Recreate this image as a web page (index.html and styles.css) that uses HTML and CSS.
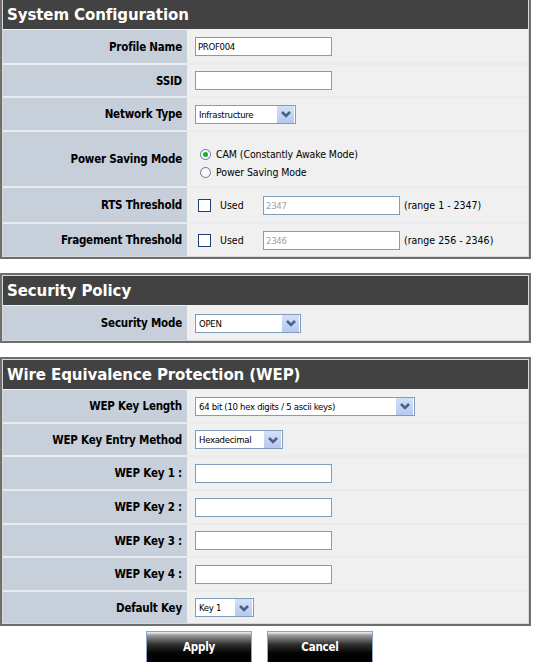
FILE: index.html
```html
<!DOCTYPE html>
<html>
<head>
<meta charset="utf-8">
<link rel="stylesheet" href="styles.css">
</head>
<body>
<div class="page">
  <div class="section s1">
    <div class="head">System Configuration</div>
    <div class="rows">
      <div class="row h33"><div class="lab">Profile Name</div><div class="val"><span class="input w137">PROF004</span></div></div>
      <div class="row h31"><div class="lab">SSID</div><div class="val"><span class="input w137"></span></div></div>
      <div class="row h32"><div class="lab">Network Type</div><div class="val"><span class="select"><span class="stext w77">Infrastructure</span><span class="btn"><svg width="16" height="16" viewBox="0 0 16 16"><path d="M4 6 L8 10 L12 6" fill="none" stroke="#4a5f8a" stroke-width="2.6"/></svg></span></span></div></div>
      <div class="row h54"><div class="lab">Power Saving Mode</div><div class="val col">
        <div class="opt"><span class="radio on"><span class="dot"></span></span>CAM (Constantly Awake Mode)</div>
        <div class="opt"><span class="radio"></span>Power Saving Mode</div>
      </div></div>
      <div class="row h34"><div class="lab">RTS Threshold</div><div class="val"><span class="check"></span><span class="used">Used</span><span class="input w137 dim">2347</span><span class="range">(range 1 - 2347)</span></div></div>
      <div class="row h32"><div class="lab">Fragement Threshold</div><div class="val"><span class="check"></span><span class="used">Used</span><span class="input w137 dim">2346</span><span class="range">(range 256 - 2346)</span></div></div>
    </div>
  </div>

  <div class="section">
    <div class="head">Security Policy</div>
    <div class="rows">
      <div class="row h34"><div class="lab">Security Mode</div><div class="val"><span class="select"><span class="stext w82">OPEN</span><span class="btn"><svg width="16" height="16" viewBox="0 0 16 16"><path d="M4 6 L8 10 L12 6" fill="none" stroke="#4a5f8a" stroke-width="2.6"/></svg></span></span></div></div>
    </div>
  </div>

  <div class="section">
    <div class="head">Wire Equivalence Protection (WEP)</div>
    <div class="rows">
      <div class="row h32"><div class="lab">WEP Key Length</div><div class="val"><span class="select"><span class="stext w192">64 bit (10 hex digits / 5 ascii keys)</span><span class="btn"><svg width="16" height="16" viewBox="0 0 16 16"><path d="M4 6 L8 10 L12 6" fill="none" stroke="#4a5f8a" stroke-width="2.6"/></svg></span></span></div></div>
      <div class="row h31"><div class="lab">WEP Key Entry Method</div><div class="val"><span class="select"><span class="stext w62">Hexadecimal</span><span class="btn"><svg width="16" height="16" viewBox="0 0 16 16"><path d="M4 6 L8 10 L12 6" fill="none" stroke="#4a5f8a" stroke-width="2.6"/></svg></span></span></div></div>
      <div class="row h32"><div class="lab">WEP Key 1 :</div><div class="val"><span class="input w137"></span></div></div>
      <div class="row h32"><div class="lab">WEP Key 2 :</div><div class="val"><span class="input w137"></span></div></div>
      <div class="row h31"><div class="lab">WEP Key 3 :</div><div class="val"><span class="input w137"></span></div></div>
      <div class="row h32"><div class="lab">WEP Key 4 :</div><div class="val"><span class="input w137"></span></div></div>
      <div class="row h31"><div class="lab">Default Key</div><div class="val"><span class="select"><span class="stext w33">Key 1</span><span class="btn"><svg width="16" height="16" viewBox="0 0 16 16"><path d="M4 6 L8 10 L12 6" fill="none" stroke="#4a5f8a" stroke-width="2.6"/></svg></span></span></div></div>
    </div>
  </div>

  <div class="buttons">
    <span class="bbtn">Apply</span>
    <span class="bbtn">Cancel</span>
  </div>
</div>
</body>
</html>
```

FILE: styles.css
```css
html, body {
  margin: 0;
  padding: 0;
  background: #ffffff;
}
body {
  font-family: "DejaVu Sans Condensed", "DejaVu Sans", "Liberation Sans", sans-serif;
  color: #000;
}
.page {
  width: 531px;
  display: flex;
  flex-direction: column;
  gap: 14px;
}
.section {
  border: 2px solid #6e6e6e;
  box-shadow: inset 0 0 0 1px #d8d8d8;
  padding: 1px;
  background: #f0f0f0;
  display: flex;
  flex-direction: column;
  gap: 1px;
}
.s1 {
  border-top-width: 0;
  padding-top: 0;
}
.head {
  background: #424242;
  color: #ffffff;
  font-weight: bold;
  font-size: 16.7px;
  height: 29px;
  line-height: 29px;
  padding-left: 4px;
  letter-spacing: -0.1px;
}
.rows {
  display: flex;
  flex-direction: column;
  gap: 2px;
  background: #e9ebee;
}
.row {
  display: flex;
}
.h31 { height: 31px; }
.h32 { height: 32px; }
.h33 { height: 33px; }
.h34 { height: 34px; }
.h54 { height: 54px; }
.lab {
  width: 179px;
  background: #c7cfdb;
  font-weight: bold;
  font-size: 11.5px;
  padding-right: 5px;
  display: flex;
  align-items: center;
  justify-content: flex-end;
  letter-spacing: -0.2px;
}
.val {
  flex: 1;
  background: #f0f0f0;
  display: flex;
  align-items: center;
  padding-left: 8px;
  font-size: 10.5px;
}
.val.col {
  flex-direction: column;
  align-items: flex-start;
  justify-content: center;
  gap: 6px;
  padding-top: 8px;
  box-sizing: border-box;
}
.input {
  display: inline-block;
  box-sizing: border-box;
  height: 19px;
  line-height: 17px;
  border: 1px solid #7f9db9;
  background: #ffffff;
  font-size: 9.5px;
  padding-left: 2px;
  letter-spacing: -0.3px;
  color: #000;
}
.input.dim { color: #a0a0a0; }
.w137 { width: 137px; }
.select {
  display: inline-flex;
  align-items: center;
  height: 19px;
  box-sizing: border-box;
  border: 1px solid #7f9db9;
  background: #ffffff;
  padding-right: 1px;
}
.stext {
  font-size: 9.5px;
  padding-left: 3px;
  letter-spacing: -0.3px;
  line-height: 17px;
  white-space: nowrap;
  overflow: hidden;
}
.w77 { width: 77px; }
.w82 { width: 82px; }
.w192 { width: 196px; }
.w62 { width: 64px; }
.w33 { width: 35px; }
.btn {
  width: 17px;
  height: 17px;
  background: linear-gradient(#d4e0f7, #b6c9ee);
  border-left: 1px solid #ffffff;
  display: flex;
  align-items: center;
  justify-content: center;
}
.opt {
  display: flex;
  align-items: center;
  gap: 5px;
  padding-left: 5px;
  font-size: 10.5px;
  letter-spacing: -0.1px;
}
.radio {
  width: 9px;
  height: 9px;
  border: 1px solid #5a7aa0;
  border-radius: 50%;
  background: #f8f8f8;
  display: inline-flex;
  align-items: center;
  justify-content: center;
}
.dot {
  width: 5px;
  height: 5px;
  border-radius: 50%;
  background: #2ca52c;
}
.check {
  width: 11px;
  height: 11px;
  border: 1px solid #1f3f6e;
  background: #ffffff;
  margin-left: 3px;
}
.used {
  margin-left: 9px;
  width: 43px;
}
.range { margin-left: 4px; }
.buttons {
  display: flex;
  justify-content: center;
  gap: 15px;
  margin-top: -9px;
  padding-right: 12px;
}
.bbtn {
  width: 106px;
  height: 31px;
  box-sizing: border-box;
  border: 1px solid #8aa3c8;
  border-bottom: none;
  background: linear-gradient(#f4f4f4 0%, #9a9a9a 11%, #2e2e2e 42%, #050505 70%, #000 100%);
  color: #ffffff;
  font-weight: bold;
  font-size: 11.5px;
  display: flex;
  align-items: center;
  justify-content: center;
  letter-spacing: -0.2px;
}
```
